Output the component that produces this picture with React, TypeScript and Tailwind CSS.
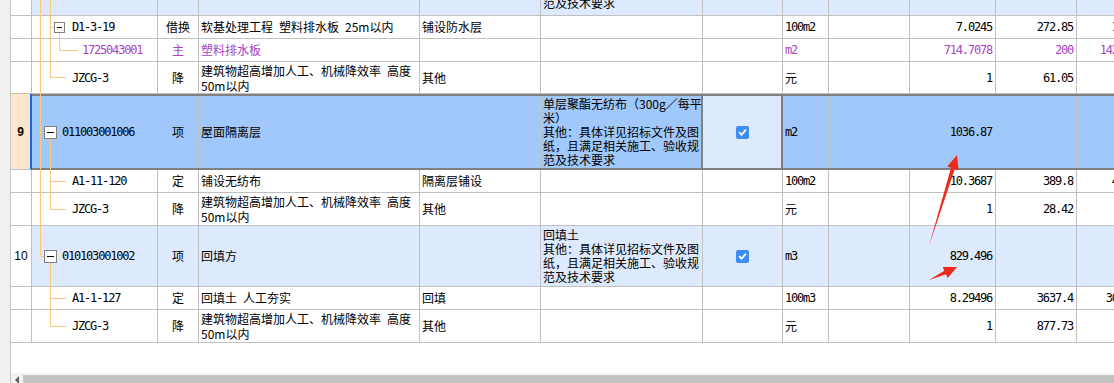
import type { ReactNode } from "react";

type Ln = [number, number, number, number];

type Row = {
  h: string;
  ch: number;
  no?: string;
  tone: "white" | "light" | "sel";
  lines: Ln[];
  box?: { x: number; y: number; s: number };
  pl: string;
  code?: string;
  kind?: string;
  name?: ReactNode;
  feat?: string;
  desc?: ReactNode;
  check?: boolean;
  unit?: string;
  qty?: string;
  price?: string;
  total?: string;
  purple?: boolean;
};

const MONO = "font-['DejaVu_Sans_Mono',monospace] text-[12px] tracking-[-1.2px]";
const CJK = "font-['Noto_Sans_CJK_SC',sans-serif] text-[12px] leading-[14px]";
const CELL = "border-r border-[#c0c0c0] overflow-hidden flex items-center";

const twoLine = (
  <div className="whitespace-pre leading-[15px]">
    {"建筑物超高增加人工、机械降效率\u2002高度"}
    <br />
    50m以内
  </div>
);

const descLines = (first: string[]) => (
  <div className="whitespace-nowrap">
    {[...first, "其他：具体详见招标文件及图", "纸，且满足相关施工、验收规", "范及技术要求"].map((t) => (
      <div key={t}>{t}</div>
    ))}
  </div>
);

const rows: Row[] = [
  {
    h: "h-[16px]",
    ch: 15,
    tone: "light",
    lines: [
      [8.5, 0, 8.5, 16],
      [18.5, 0, 18.5, 16],
    ],
    pl: "pl-[40px]",
    desc: <div className="self-start -mt-[4px]">范及技术要求</div>,
  },
  {
    h: "h-[23px]",
    ch: 22,
    tone: "white",
    lines: [
      [8.5, 0, 8.5, 23],
      [18.5, 0, 18.5, 23],
      [18.5, 11.5, 22, 11.5],
      [27.5, 17, 27.5, 23],
    ],
    box: { x: 22, y: 6, s: 11 },
    pl: "pl-[40px]",
    code: "D1-3-19",
    kind: "借换",
    name: "软基处理工程\u2002塑料排水板\u200225m以内",
    feat: "铺设防水层",
    unit: "100m2",
    qty: "7.0245",
    price: "272.85",
    total: "1916.63",
  },
  {
    h: "h-[23px]",
    ch: 22,
    tone: "white",
    purple: true,
    lines: [
      [8.5, 0, 8.5, 23],
      [18.5, 0, 18.5, 23],
      [27.5, 0, 27.5, 11.5],
      [27.5, 11.5, 46, 11.5],
    ],
    pl: "pl-[50px]",
    code: "1725043001",
    kind: "主",
    name: "塑料排水板",
    unit: "m2",
    qty: "714.7078",
    price: "200",
    total: "142941.56",
  },
  {
    h: "h-[32px]",
    ch: 31,
    tone: "white",
    lines: [
      [8.5, 0, 8.5, 33],
      [18.5, 0, 18.5, 15.5],
      [18.5, 15.5, 34, 15.5],
    ],
    pl: "pl-[40px]",
    code: "JZCG-3",
    kind: "降",
    name: twoLine,
    feat: "其他",
    unit: "元",
    qty: "1",
    price: "61.05",
    total: "61.05",
  },
  {
    h: "h-[76px]",
    ch: 72,
    no: "9",
    tone: "sel",
    lines: [
      [8.5, -2, 8.5, 74],
      [8.5, 36.5, 12, 36.5],
      [18.5, 43, 18.5, 74],
    ],
    box: { x: 12, y: 30, s: 13 },
    pl: "pl-[30px]",
    code: "011003001006",
    kind: "项",
    name: "屋面隔离层",
    desc: descLines(["单层聚酯无纺布（300g／每平", "米）"]),
    check: true,
    unit: "m2",
    qty: "1036.87",
  },
  {
    h: "h-[23px]",
    ch: 22,
    tone: "white",
    lines: [
      [8.5, -1, 8.5, 23],
      [18.5, -1, 18.5, 23],
      [18.5, 11.5, 34, 11.5],
    ],
    pl: "pl-[40px]",
    code: "A1-11-120",
    kind: "定",
    name: "铺设无纺布",
    feat: "隔离层铺设",
    unit: "100m2",
    qty: "10.3687",
    price: "389.8",
    total: "4041.72",
  },
  {
    h: "h-[33px]",
    ch: 32,
    tone: "white",
    lines: [
      [8.5, 0, 8.5, 33],
      [18.5, 0, 18.5, 16.5],
      [18.5, 16.5, 34, 16.5],
    ],
    pl: "pl-[40px]",
    code: "JZCG-3",
    kind: "降",
    name: twoLine,
    feat: "其他",
    unit: "元",
    qty: "1",
    price: "28.42",
    total: "28.42",
  },
  {
    h: "h-[61px]",
    ch: 60,
    no: "10",
    tone: "light",
    lines: [
      [8.5, 0, 8.5, 30.5],
      [8.5, 30.5, 12, 30.5],
      [18.5, 37, 18.5, 61],
    ],
    box: { x: 12, y: 24, s: 13 },
    pl: "pl-[30px]",
    code: "010103001002",
    kind: "项",
    name: "回填方",
    desc: descLines(["回填土"]),
    check: true,
    unit: "m3",
    qty: "829.496",
  },
  {
    h: "h-[23px]",
    ch: 22,
    tone: "white",
    lines: [
      [18.5, 0, 18.5, 23],
      [18.5, 11.5, 34, 11.5],
    ],
    pl: "pl-[40px]",
    code: "A1-1-127",
    kind: "定",
    name: "回填土\u2002人工夯实",
    feat: "回填",
    unit: "100m3",
    qty: "8.29496",
    price: "3637.4",
    total: "30172.09",
  },
  {
    h: "h-[33px]",
    ch: 32,
    tone: "white",
    lines: [
      [18.5, 0, 18.5, 16.5],
      [18.5, 16.5, 34, 16.5],
    ],
    pl: "pl-[40px]",
    code: "JZCG-3",
    kind: "降",
    name: twoLine,
    feat: "其他",
    unit: "元",
    qty: "1",
    price: "877.73",
    total: "877.73",
  },
];

function Tree({ r }: { r: Row }) {
  return (
    <svg className="absolute left-0 top-0 overflow-visible" width={126} height={r.ch}>
      {r.lines.map(([x1, y1, x2, y2], i) => (
        <line key={i} x1={x1} y1={y1} x2={x2} y2={y2} stroke="#fcc880" strokeWidth={1} />
      ))}
      {r.box && (
        <g>
          <rect
            x={r.box.x + 0.5}
            y={r.box.y + 0.5}
            width={r.box.s - 1}
            height={r.box.s - 1}
            fill="#fff"
            stroke="#808080"
          />
          <line
            x1={r.box.x + 3}
            x2={r.box.x + r.box.s - 3}
            y1={r.box.y + Math.floor(r.box.s / 2) + 0.5}
            y2={r.box.y + Math.floor(r.box.s / 2) + 0.5}
            stroke="#000"
          />
        </g>
      )}
    </svg>
  );
}

function Check() {
  return (
    <span className="w-[13px] h-[13px] rounded-[2px] bg-[#3d8ef2] flex items-center justify-center">
      <svg width="9" height="8" viewBox="0 0 9 8">
        <path d="M1 4.2 L3.6 6.6 L8 1.6" fill="none" stroke="#fff" strokeWidth="1.8" />
      </svg>
    </span>
  );
}

function TableRow({ r }: { r: Row }) {
  const sel = r.tone === "sel";
  const bg = sel ? "bg-[#a0c8fa]" : r.tone === "light" ? "bg-[#dde9fc]" : "bg-white";
  const ink = r.purple ? "text-[#a844c0]" : "text-black";
  return (
    <div className={`flex shrink-0 ${r.h}`}>
      <div
        className={`w-[21px] shrink-0 flex items-center justify-center border-b border-[#c0c0c0] font-['Liberation_Sans',sans-serif] text-[12px] text-black ${
          sel ? "bg-[#fde6ca] border-r-2 border-r-[#1466f0] font-bold" : "bg-white border-r"
        }`}
      >
        {r.no}
      </div>
      <div
        className={`shrink-0 grid grid-cols-[126px_41px_221px_121px_162px_80px_46px_81px_86px_81px_81px] ${
          sel ? "border-y-2 border-[#808080]" : "border-b border-[#c0c0c0]"
        } ${bg} ${ink}`}
      >
        <div className={`${CELL} relative overflow-visible ${r.pl} ${MONO}`}>
          <Tree r={r} />
          <span className="relative">{r.code}</span>
        </div>
        <div className={`${CELL} justify-center ${CJK}`}>{r.kind}</div>
        <div className={`${CELL} pl-[2px] ${CJK}`}>{r.name}</div>
        <div className={`${CELL} pl-[2px] ${CJK}`}>{r.feat}</div>
        <div className={`${CELL} pl-[2px] ${CJK} ${sel ? "border-r-2 border-r-[#808080]" : ""}`}>{r.desc}</div>
        <div
          className={`${CELL} justify-center ${sel ? "bg-[#dde9fc] border-r-2 border-r-[#808080]" : ""}`}
        >
          {r.check && <Check />}
        </div>
        <div className={`${CELL} pl-[2px] ${r.unit === "元" ? CJK : MONO}`}>{r.unit}</div>
        <div className={CELL} />
        <div className={`${CELL} justify-end pr-[3px] ${MONO}`}>{r.qty}</div>
        <div className={`${CELL} justify-end pr-[3px] ${MONO}`}>{r.price}</div>
        <div className={`${CELL} justify-end pr-[3px] ${MONO}`}>{r.total}</div>
      </div>
    </div>
  );
}

function Arrows() {
  return (
    <svg className="absolute left-0 top-0 pointer-events-none" width={1114} height={383}>
      <polygon
        points="929,246 954.8,169 958.6,170.2 957,155 947.2,166.6 951,167.8"
        fill="#ee2a1b"
      />
      <polygon
        points="929,280 946,274.3 947.7,277.9 957,267 942.7,267.1 944.4,270.7"
        fill="#ee2a1b"
      />
    </svg>
  );
}

export default function App() {
  return (
    <div className="w-[1114px] h-[383px] overflow-hidden flex bg-white relative">
      <div className="w-[10px] shrink-0 bg-[#f0f0f0]" />
      <div className="flex-1 min-w-0 flex flex-col overflow-hidden border-l border-[#c8c8c8]">
        {rows.map((r, i) => (
          <TableRow key={i} r={r} />
        ))}
        <div className="flex-1 bg-white" />
        <div className="h-[10px] shrink-0 bg-[#f2f2f2] flex items-end">
          <svg className="ml-[3px] shrink-0" width="6" height="7" viewBox="0 0 6 7">
            <path d="M5 0 L1 4 L5 8 Z" fill="#606060" />
          </svg>
          <div className="ml-[3px] flex-1 h-[8px] bg-[#c2c2c2]" />
        </div>
      </div>
      <Arrows />
    </div>
  );
}
